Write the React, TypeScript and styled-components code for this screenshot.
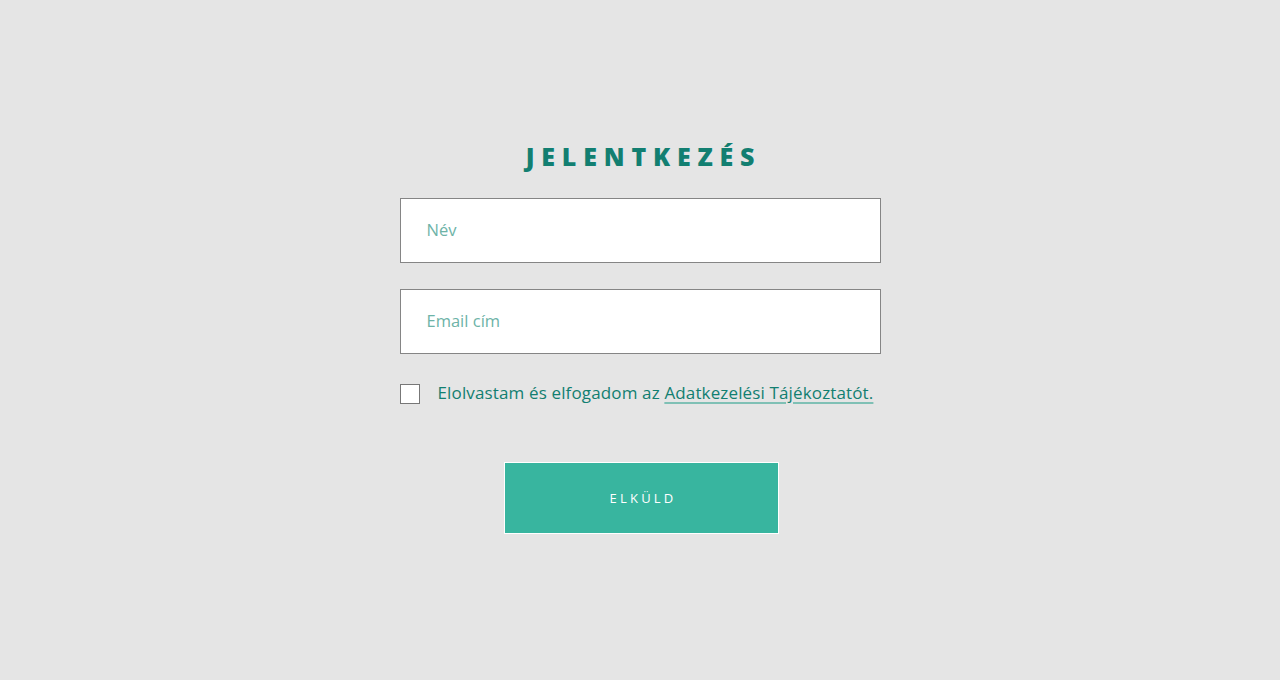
import React from "react";
import styled, { createGlobalStyle } from "styled-components";

const Global = createGlobalStyle`
  html, body { margin: 0; padding: 0; background: #e5e5e5; }
  body { font-family: "Open Sans", "Liberation Sans", sans-serif; }
  * { box-sizing: border-box; }
`;

const Page = styled.div`
  min-height: 680px;
  display: flex;
  justify-content: center;
  padding-top: 139px;
`;

const Form = styled.form`
  width: 481px;
  display: flex;
  flex-direction: column;
  align-items: stretch;
`;

const Title = styled.h2`
  margin: 0 0 25px 0;
  text-align: center;
  font-family: "Open Sans", "Lato", sans-serif;
  font-weight: 800;
  font-size: 25px;
  line-height: 34px;
  letter-spacing: 6.8px;
  padding-left: 7px;
  color: #127f71;
`;

const Input = styled.input<{ $mb?: number }>`
  height: 65px;
  width: 100%;
  border: 1px solid #858585;
  background: #fff;
  padding: 0 26px 3px 26px;
  font-family: "Open Sans", sans-serif;
  font-weight: 500;
  font-size: 16.5px;
  color: #127f71;
  outline: none;
  margin-bottom: ${(p) => p.$mb ?? 26}px;
  &::placeholder { color: #6db3a7; }
`;

const CheckRow = styled.div`
  display: flex;
  align-items: center;
  gap: 18px;
  margin-top: 29px;
  font-family: "Open Sans", sans-serif;
  font-weight: 500;
  font-size: 17px;
  letter-spacing: 0.14px;
  color: #127f71;
  white-space: nowrap;
`;

const Label = styled.span`
  margin-top: -2px;
`;

const Box = styled.span`
  width: 20px;
  height: 20px;
  border: 1px solid #777;
  background: #fff;
  flex: none;
`;

const Link = styled.a`
  color: #127f71;
  text-decoration: underline;
  text-decoration-color: #7fc0b5;
  text-decoration-thickness: 1.5px;
  text-underline-offset: 3px;
`;

const ButtonWrap = styled.div`
  display: flex;
  justify-content: center;
  margin-top: 58px;
`;

const Button = styled.button`
  width: 275px;
  height: 72px;
  background: #38b59f;
  border: 1px solid #fff;
  color: #fff;
  font-family: "Open Sans", sans-serif;
  font-weight: 500;
  font-size: 13px;
  letter-spacing: 3.2px;
  padding: 0 0 0 3px;
  margin-left: 3px;
`;

export default function App() {
  return (
    <>
      <Global />
      <Page>
        <Form onSubmit={(e) => e.preventDefault()}>
          <Title>JELENTKEZÉS</Title>
          <Input placeholder="Név" />
          <Input placeholder="Email cím" $mb={0} />
          <CheckRow>
            <Box />
            <Label>
              Elolvastam és elfogadom az <Link href="#">Adatkezelési Tájékoztatót.</Link>
            </Label>
          </CheckRow>
          <ButtonWrap>
            <Button type="submit">ELKÜLD</Button>
          </ButtonWrap>
        </Form>
      </Page>
    </>
  );
}
